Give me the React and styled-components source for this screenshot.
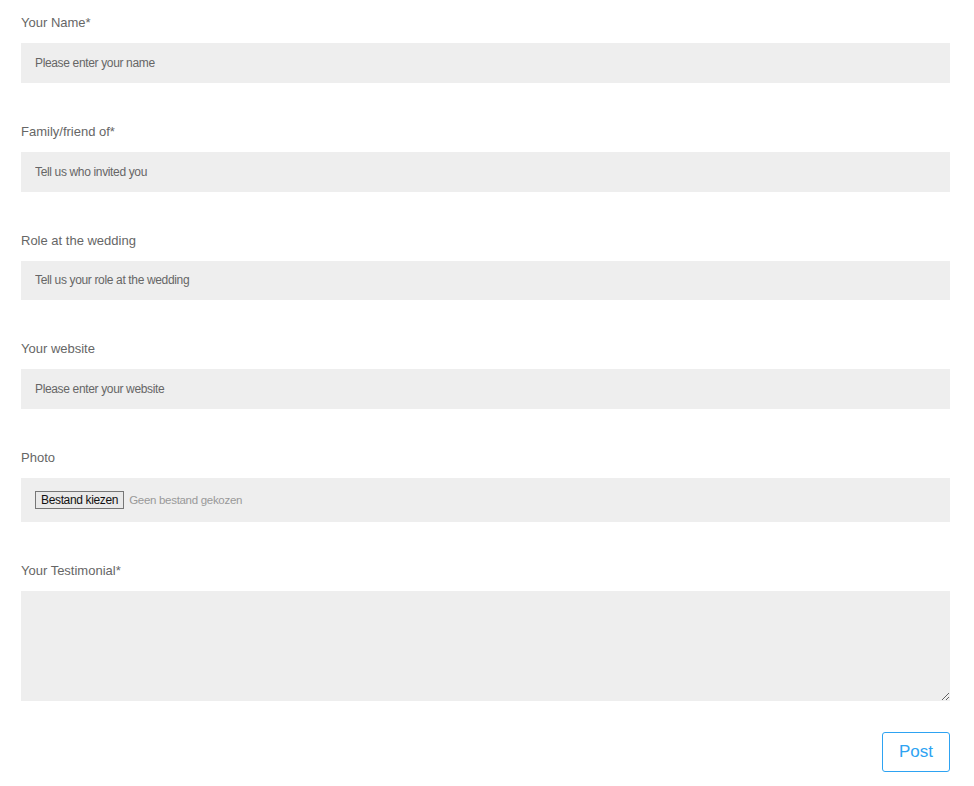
import styled, { createGlobalStyle } from "styled-components";

const GlobalStyle = createGlobalStyle`
  body {
    margin: 0;
    background: #fff;
    font-family: "Liberation Sans", Arial, sans-serif;
  }
`;

const Form = styled.form`
  padding: 13px 24px 14px 21px;
`;

const Field = styled.div`
  margin-bottom: 39px;
`;

const Label = styled.label`
  display: block;
  font-size: 13px;
  line-height: 20px;
  color: #666;
  margin-bottom: 10px;
`;

const TextInput = styled.input`
  display: block;
  box-sizing: border-box;
  width: 100%;
  height: 39.8px;
  border: none;
  border-radius: 0;
  background: #eee;
  padding: 0 14px;
  font-family: "Liberation Sans", Arial, sans-serif;
  font-size: 12px;
  letter-spacing: -0.35px;
  color: #666;
  outline: none;

  &::placeholder {
    color: #666;
    opacity: 1;
  }
`;

const FileBox = styled.div`
  display: flex;
  align-items: center;
  gap: 5px;
  box-sizing: border-box;
  height: 44px;
  background: #eee;
  padding: 0 14px;
`;

const FileButton = styled.span`
  display: inline-block;
  font-family: "Liberation Sans", Arial, sans-serif;
  font-size: 12px;
  letter-spacing: -0.35px;
  line-height: 14px;
  color: #111;
  background: #e9e9e9;
  border: 1px solid #767676;
  padding: 1px 5px;
`;

const FileStatus = styled.span`
  font-size: 11.5px;
  letter-spacing: -0.3px;
  color: #999;
`;

const TextArea = styled.textarea`
  display: block;
  box-sizing: border-box;
  width: 100%;
  height: 110px;
  border: none;
  border-radius: 0;
  background: #eee;
  padding: 14px;
  font-family: "Liberation Sans", Arial, sans-serif;
  font-size: 12px;
  color: #666;
  outline: none;
`;

const Actions = styled.div`
  display: flex;
  justify-content: flex-end;
  margin-top: -8px;
`;

const PostButton = styled.button`
  width: 68px;
  height: 40px;
  background: #fff;
  border: 1px solid #2ea3f2;
  border-radius: 3px;
  color: #2ea3f2;
  font-family: "Liberation Sans", Arial, sans-serif;
  font-size: 17px;
  cursor: pointer;
`;

const fields = [
  { label: "Your Name*", placeholder: "Please enter your name" },
  { label: "Family/friend of*", placeholder: "Tell us who invited you" },
  { label: "Role at the wedding", placeholder: "Tell us your role at the wedding" },
  { label: "Your website", placeholder: "Please enter your website" },
];

export default function App() {
  return (
    <>
      <GlobalStyle />
      <Form onSubmit={(e) => e.preventDefault()}>
        {fields.map((f) => (
          <Field key={f.label}>
            <Label>{f.label}</Label>
            <TextInput type="text" placeholder={f.placeholder} />
          </Field>
        ))}

        <Field>
          <Label>Photo</Label>
          <FileBox>
            <FileButton>Bestand kiezen</FileButton>
            <FileStatus>Geen bestand gekozen</FileStatus>
          </FileBox>
        </Field>

        <Field>
          <Label>Your Testimonial*</Label>
          <TextArea />
        </Field>

        <Actions>
          <PostButton type="submit">Post</PostButton>
        </Actions>
      </Form>
    </>
  );
}
